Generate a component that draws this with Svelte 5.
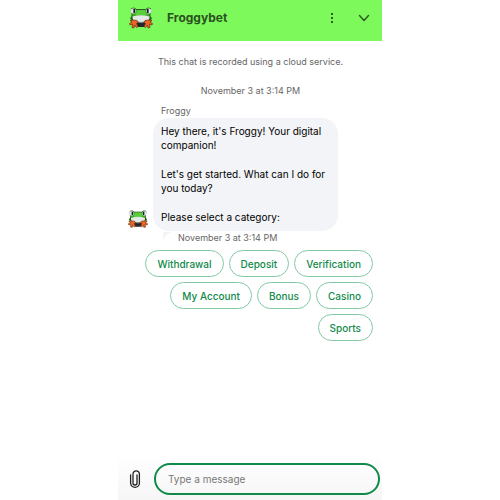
<script>
  const intro = [
    "Hey there, it's Froggy! Your digital companion!",
    "Let's get started. What can I do for you today?",
    "Please select a category:",
  ];

  const categories = [
    "Withdrawal",
    "Deposit",
    "Verification",
    "My Account",
    "Bonus",
    "Casino",
    "Sports",
  ];

  let message = $state("");
</script>

{#snippet frog()}
  <svg class="frog" viewBox="0 0 24 22" aria-hidden="true">
    <path d="M1 11 4 8h16l3 3-2 4H3z" fill="#2c7a22" />
    <path d="M7 13h10v5l-2 2H9l-2-2z" fill="#23292b" />
    <path
      d="M2.500 1.500Q5 0 7.500 2.500h9Q19 0 21.500 1.500L21 8v4l-3 3H6l-3-3V8z"
      fill="#43a52c"
      stroke="#1c3a1b"
      stroke-width=".8"
    />
    <path d="M8 3h8l1.500 5h-11z" fill="#56cf3a" />
    <path d="M3.500 9.500Q12 7 20.500 9.500L20 12.500Q18 15 15 15H9Q6 15 4 12.500z" fill="#e3e9e4" />
    <path d="M6 14.500Q12 16.500 18 14.500" fill="none" stroke="#7f8a86" stroke-width="1" />
    <rect x="2" y="1.500" width="4.500" height="5" rx="1.500" fill="#dfe4ee" />
    <rect x="17.500" y="1.500" width="4.500" height="5" rx="1.500" fill="#dfe4ee" />
    <path d="M5.200 2v4M18.800 2v4" stroke="#15191b" stroke-width="1.600" />
    <path
      d="M1 13.500 4 13l4 .5 1 2-1.500 1 1.500 3-1.500 1L5.500 18l-.5 3-2-.500.500-3.500-2.500 1L.5 16.500 3 15z"
      fill="#ed6625"
      stroke="#6b2d18"
      stroke-width=".7"
      stroke-linejoin="round"
    />
    <path
      d="m23 13.500-3-.5-4 .5-1 2 1.500 1-1.500 3 1.500 1 2-2.500.5 3 2-.500-.500-3.500 2.500 1 .5-1.500L21 15z"
      fill="#ed6625"
      stroke="#6b2d18"
      stroke-width=".7"
      stroke-linejoin="round"
    />
  </svg>
{/snippet}

<div class="chat">
  <header>
    <span class="logo">{@render frog()}</span>
    <h1>Froggybet</h1>
    <button class="icon" aria-label="Menu">
      <svg viewBox="0 0 16 16" fill="#2f5a24">
        <rect x="7" y="3" width="2" height="2" />
        <rect x="7" y="7" width="2" height="2" />
        <rect x="7" y="11" width="2" height="2" />
      </svg>
    </button>
    <button class="icon" aria-label="Minimize">
      <svg viewBox="0 0 16 16" fill="none" stroke="#2f5a24" stroke-width="1.500" stroke-linecap="round" stroke-linejoin="round">
        <path d="m3.500 5.500 4.500 5 4.500-5" />
      </svg>
    </button>
  </header>

  <main>
    <p class="note">This chat is recorded using a cloud service.</p>
    <p class="note">November 3 at 3:14 PM</p>

    <div class="message">
      <span class="avatar">{@render frog()}</span>
      <div class="content">
        <span class="author">Froggy</span>
        <div class="bubble">
          {#each intro as text}
            <p>{text}</p>
          {/each}
        </div>
      </div>
    </div>

    <div class="meta">
      <svg viewBox="0 0 10 8" aria-hidden="true"><path d="M0 0h9Q3 2 0 8z" fill="#f3f4f7" /></svg>
      <time>November 3 at 3:14 PM</time>
    </div>

    <div class="categories">
      {#each categories as category}
        <button>{category}</button>
      {/each}
    </div>
  </main>

  <footer>
    <button class="attach" aria-label="Attach a file">
      <svg viewBox="0 0 12 20" fill="none" stroke="#222" stroke-width="1.300" stroke-linecap="round">
        <path d="M8 6v8a2 2 0 0 1-4 0V5a3.200 3.200 0 0 1 6.400 0v9a4.400 4.400 0 0 1-8.800 0V6" />
      </svg>
    </button>
    <input type="text" placeholder="Type a message" aria-label="Type a message" bind:value={message} />
  </footer>
</div>

<style>
  :global(body) {
    margin: 0;
    background: #fff;
  }

  .chat {
    display: flex;
    flex-direction: column;
    box-sizing: border-box;
    min-height: 100vh;
    padding: 0 118px;
    font-family: Inter, "Liberation Sans", sans-serif;
    font-size: 10px;
    line-height: 14px;
    color: #111;
  }

  p,
  h1 {
    margin: 0;
  }

  button {
    padding: 0;
    border: 0;
    background: none;
    font: inherit;
    cursor: pointer;
  }

  svg {
    display: block;
  }

  .frog {
    width: 100%;
  }

  header {
    display: flex;
    align-items: center;
    height: 41px;
    padding: 0 10px 0 11px;
    box-sizing: border-box;
    background: #7ef95b;
  }

  .logo {
    width: 24px;
    padding-bottom: 5px;
  }

  h1 {
    flex: 1;
    padding: 0 0 5px 14px;
    font-size: 12px;
    font-weight: 700;
    color: #2b5220;
  }

  .icon {
    width: 16px;
    margin-left: 16px;
    padding-bottom: 5px;
  }

  main {
    flex: 1;
    padding: 14px 9px 0 10px;
  }

  .note {
    margin-bottom: 15px;
    text-align: center;
  }

  .note,
  .author,
  .meta {
    font-size: 9px;
    color: #666;
  }

  .message {
    display: flex;
    align-items: flex-end;
    gap: 5px;
    margin-top: -9px;
  }

  .avatar {
    width: 20px;
    padding-bottom: 3px;
  }

  .content {
    flex: 1;
    padding-right: 35px;
  }

  .author {
    display: block;
    padding-left: 8px;
  }

  .bubble {
    display: grid;
    gap: 15px;
    padding: 6px 8px 7px;
    border-radius: 16px;
    background: #f3f4f7;
    color: #000;
  }

  .meta {
    display: flex;
    gap: 5px;
    padding-left: 35px;
  }

  .meta svg {
    width: 10px;
    height: 8px;
    margin-top: 1px;
  }

  .categories {
    display: flex;
    flex-wrap: wrap;
    justify-content: flex-end;
    gap: 5px;
    margin-top: 5px;
  }

  .categories button {
    height: 27px;
    padding: 0 11px;
    border: 1px solid #83c8a5;
    border-radius: 14px;
    font-weight: 500;
    color: #108a4b;
  }

  footer {
    display: flex;
    align-items: center;
    gap: 13px;
    padding: 8px 2px 5px 11px;
    background: linear-gradient(#fff, #f6f6f6);
  }

  .attach {
    width: 12px;
  }

  input {
    flex: 1;
    min-width: 0;
    height: 32px;
    box-sizing: border-box;
    padding: 0 12px;
    border: 2px solid #108a4b;
    border-radius: 16px;
    outline: none;
    background: transparent;
    font: inherit;
    color: #111;
  }

  input::placeholder {
    color: #777;
    opacity: 1;
  }
</style>
